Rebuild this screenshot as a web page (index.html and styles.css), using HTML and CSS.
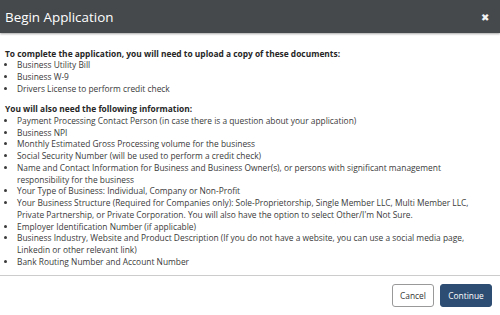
FILE: index.html
```html
<!DOCTYPE html>
<html>
<head>
<meta charset="utf-8">
<link rel="stylesheet" href="styles.css">
</head>
<body>
<div class="modal">
  <div class="header">
    <span class="title">Begin Application</span>
    <span class="close">&#x2716;</span>
  </div>
  <div class="body">
    <p class="lead">To complete the application, you will need to upload a copy of these documents:</p>
    <ul>
      <li>Business Utility Bill</li>
      <li>Business W-9</li>
      <li>Drivers License to perform credit check</li>
    </ul>
    <p class="lead second">You will also need the following information:</p>
    <ul>
      <li>Payment Processing Contact Person (in case there is a question about your application)</li>
      <li>Business NPI</li>
      <li>Monthly Estimated Gross Processing volume for the business</li>
      <li>Social Security Number (will be used to perform a credit check)</li>
      <li>Name and Contact Information for Business and Business Owner(s), or persons with significant management responsibility for the business</li>
      <li>Your Type of Business: Individual, Company or Non-Profit</li>
      <li>Your Business Structure (Required for Companies only): Sole-Proprietorship, Single Member LLC, Multi Member LLC, Private Partnership, or Private Corporation. You will also have the option to select Other/I'm Not Sure.</li>
      <li>Employer Identification Number (if applicable)</li>
      <li>Business Industry, Website and Product Description (If you do not have a website, you can use a social media page, Linkedin or other relevant link)</li>
      <li>Bank Routing Number and Account Number</li>
    </ul>
  </div>
  <div class="footer">
    <button class="btn cancel">Cancel</button>
    <button class="btn continue">Continue</button>
  </div>
</div>
</body>
</html>
```
FILE: styles.css
```css
* { box-sizing: border-box; }
html, body { margin: 0; padding: 0; background: #fff; }
body { font-family: "Open Sans", "Liberation Sans", sans-serif; width: 500px; height: 315px; overflow: hidden; }
.modal { display: flex; flex-direction: column; height: 315px; }
.header {
  height: 33px;
  flex: none;
  background: #45494c;
  display: flex;
  align-items: center;
  justify-content: space-between;
  padding: 0 11px 0 5px;
  box-shadow: 0 1px 2px rgba(0,0,0,0.35);
  position: relative;
}
.title { color: #fff; font-size: 13.4px; }
.close { color: #f4f4f4; font-size: 10px; }
.body {
  flex: 1;
  padding: 14.5px 5px 0 5px;
  font-size: 8.4px;
  line-height: 11.6px;
  color: #3a3a3a;
}
.lead { margin: 0; font-weight: 700; color: #262626; }
.second { margin-top: 9px; }
ul { margin: 0; padding-left: 12px; }
li { margin-bottom: 0.2px; }
.footer {
  height: 40px;
  flex: none;
  border-top: 1px solid #ccc;
  display: flex;
  justify-content: flex-end;
  align-items: center;
  gap: 6px;
  padding: 0 8px 0 0;
}
.btn {
  font-family: "Open Sans", "Liberation Sans", sans-serif;
  font-size: 8.4px;
  height: 23px;
  border-radius: 3px;
  padding: 0 6px;
}
.cancel { background: #fff; color: #333; border: 1px solid #999; width: 42px; }
.continue { background: #2e4d72; color: #fff; border: 1px solid #2e4d72; width: 52px; }
```
